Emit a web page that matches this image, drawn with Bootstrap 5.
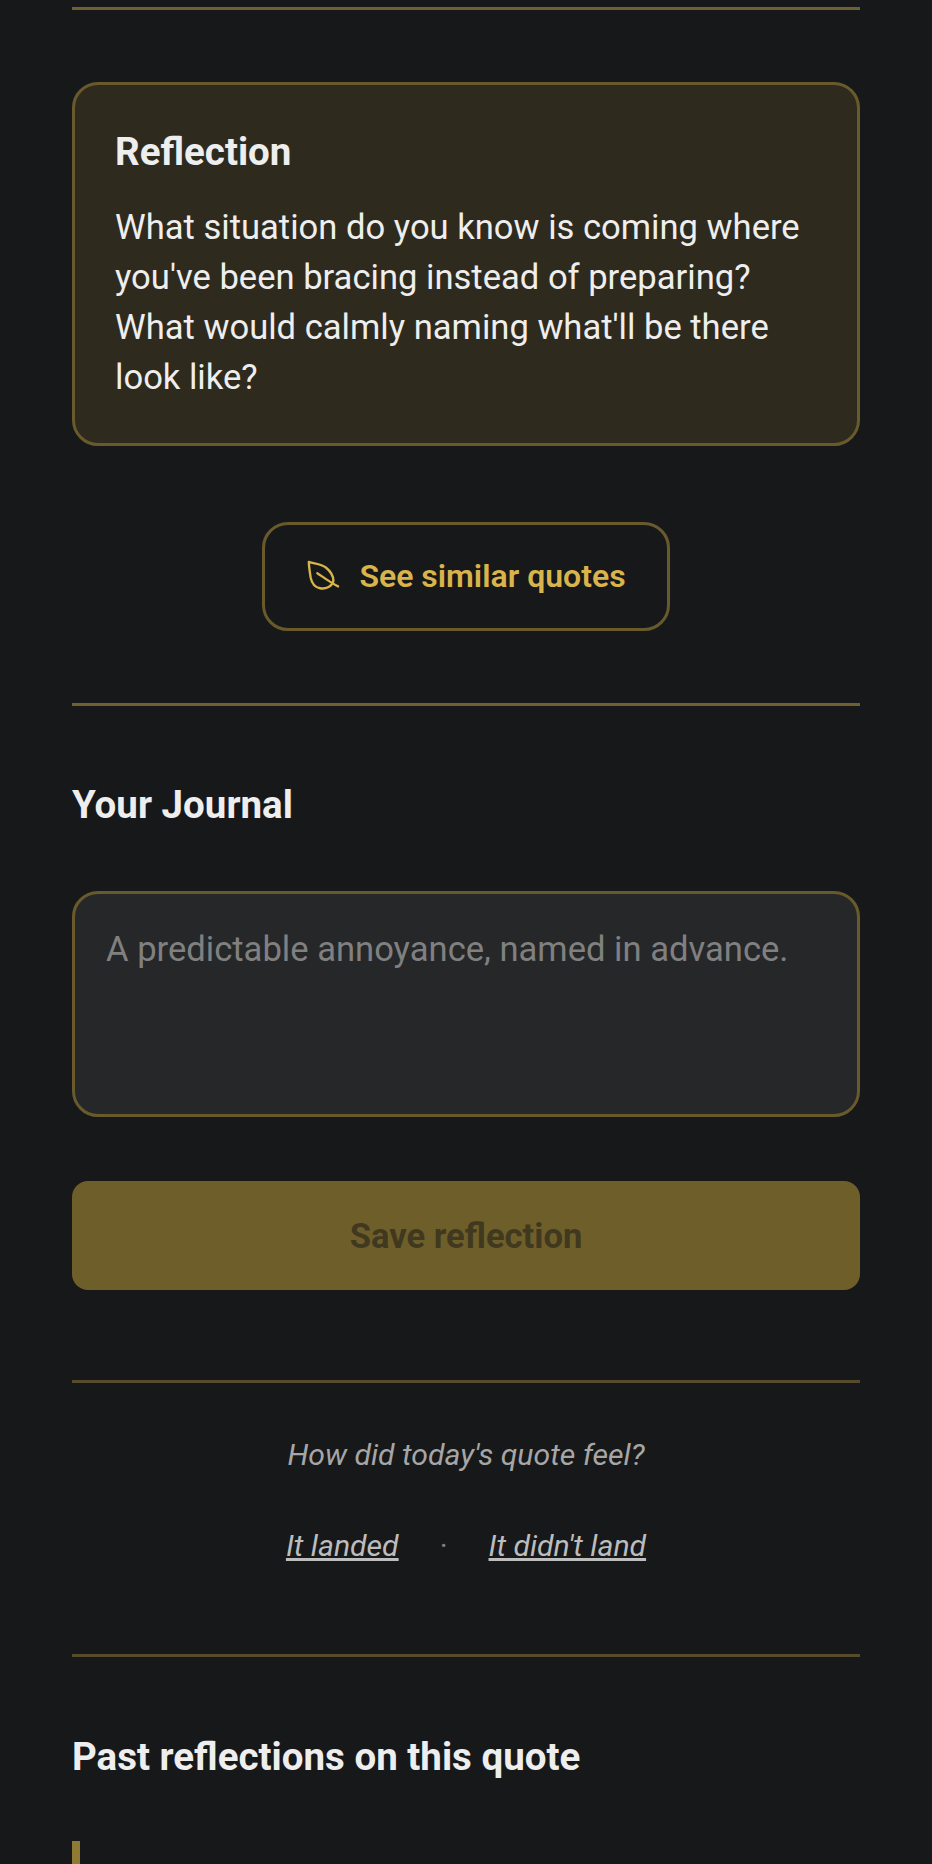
<!DOCTYPE html>
<html lang="en">
<head>
    <meta charset="UTF-8">
    <meta name="viewport" content="width=device-width, initial-scale=1.0">
    <title>Reflection</title>
    <link href="https://cdn.jsdelivr.net/npm/bootstrap@5.3.0/dist/css/bootstrap.min.css" rel="stylesheet">
    <style>
        html, body {
            height: 1864px;
            overflow: hidden;
        }
        body {
            background: #17181a;
            color: #eeeeee;
            font-family: Roboto, "Liberation Sans", sans-serif;
        }
        .page-wrap {
            padding: 7px 72px 0;
        }
        .gold-rule {
            height: 3px;
            background: #6f6030;
        }
        .gold-rule-thin {
            height: 3px;
            background: #564c2b;
        }
        .reflect-box {
            margin-top: 72px;
            height: 364px;
            padding: 43px 40px 0;
            background: #2e2a1e;
            border: 3px solid #695a2c;
            border-radius: 26px;
        }
        .reflect-title {
            font-size: 38.5px;
            font-weight: 700;
            line-height: 48px;
            margin: 0 0 26px;
        }
        .reflect-body {
            font-size: 34.6px;
            line-height: 50px;
            margin: 0;
        }
        .similar-btn {
            width: 408px;
            height: 109px;
            margin: 76px auto 72px;
            padding: 0 0 2px 0;
            color: #d9b44a;
            font-size: 32px;
            font-weight: 600;
            background: transparent;
            border: 3px solid #695a2c;
            border-radius: 26px;
            gap: 19px;
        }
        .section-title {
            font-size: 38.5px;
            font-weight: 700;
            line-height: 44px;
            margin: 0;
        }
        .journal-box {
            display: block;
            width: 100%;
            height: 226px;
            margin-top: 64px;
            padding: 32px 31px;
            font-size: 34.6px;
            line-height: 46px;
            color: #f2f2f2;
            background: #262729;
            border: 3px solid #695a2c;
            border-radius: 26px;
            resize: none;
        }
        .journal-box::placeholder {
            color: #808080;
            opacity: 1;
        }
        .save-btn {
            height: 109px;
            margin-top: 64px;
            padding-bottom: 3px;
            font-size: 34.6px;
            font-weight: 700;
            color: #40381f;
            background: #6e5f2a;
            border: 0;
            border-radius: 16px;
        }
        .feel-text {
            margin: 54px 0 0;
            font-size: 30.2px;
            font-style: italic;
            line-height: 36px;
            color: #a6a6a6;
            text-align: center;
        }
        .feel-links {
            margin-top: 55px;
            font-size: 30.2px;
            font-style: italic;
            line-height: 36px;
            gap: 41px;
        }
        .feel-links a {
            color: #bdbdbd;
        }
        .feel-dot {
            color: #808080;
            font-style: normal;
        }
        .past-bar {
            width: 8px;
            height: 60px;
            margin-top: 62px;
            background: #8f7a35;
        }
    </style>
</head>
<body>

<div class="page-wrap">
    <div class="gold-rule"></div>

    <!-- Reflection prompt -->
    <div class="reflect-box">
        <h2 class="reflect-title">Reflection</h2>
        <p class="reflect-body">What situation do you know is coming where you've been bracing instead of preparing? What would calmly naming what'll be there look like?</p>
    </div>

    <button class="similar-btn d-flex align-items-center justify-content-center" type="button">
        <svg width="34" height="34" viewBox="0 0 36 36" fill="none" stroke="currentColor" stroke-width="2.5" stroke-linecap="round" stroke-linejoin="round">
            <path d="M3 3c6 2 13 2 18 6 5 4 8 9 8 14-1 6-8 9-14 8C9 30 6 25 5 20 4 14 3 8 3 3z"/>
            <path d="M12 15c6 4 14 10 22 14"/>
        </svg>
        <span>See similar quotes</span>
    </button>

    <div class="gold-rule"></div>

    <!-- Journal -->
    <h2 class="section-title" style="margin-top:77px">Your Journal</h2>
    <textarea class="journal-box" placeholder="A predictable annoyance, named in advance."></textarea>
    <button class="save-btn btn w-100 d-block" type="button">Save reflection</button>

    <div class="gold-rule-thin" style="margin-top:90px"></div>

    <!-- Feedback -->
    <p class="feel-text">How did today's quote feel?</p>
    <div class="feel-links d-flex justify-content-center align-items-center">
        <a href="#">It landed</a>
        <span class="feel-dot">·</span>
        <a href="#">It didn't land</a>
    </div>

    <div class="gold-rule-thin" style="margin-top:90px"></div>

    <!-- Past reflections -->
    <h2 class="section-title" style="margin-top:78px">Past reflections on this quote</h2>
    <div class="past-bar"></div>
</div>

<script src="https://cdn.jsdelivr.net/npm/bootstrap@5.3.0/dist/js/bootstrap.bundle.min.js"></script>
</body>
</html>
